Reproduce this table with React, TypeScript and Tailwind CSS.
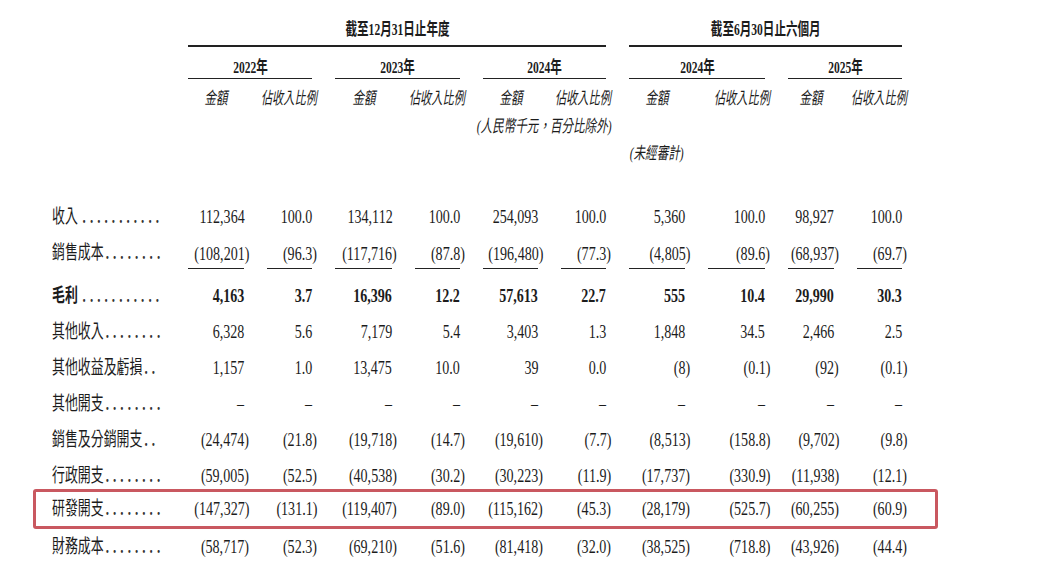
import React from 'react'

// shared column template: label, then amount / % pairs for each period
const GRID =
  'grid grid-cols-[118px_61px_50px_62px_50px_60px_50px_61px_62px_51px_50px] gap-x-[18px]'

type RowData = { label: string; values: string[]; bold?: boolean; dots: number }

const ROWS: RowData[] = [
  { label: '收入', dots: 11, values: ['112,364', '100.0', '134,112', '100.0', '254,093', '100.0', '5,360', '100.0', '98,927', '100.0'] },
  { label: '銷售成本', dots: 8, values: ['(108,201)', '(96.3)', '(117,716)', '(87.8)', '(196,480)', '(77.3)', '(4,805)', '(89.6)', '(68,937)', '(69.7)'] },
  { label: '毛利', dots: 11, bold: true, values: ['4,163', '3.7', '16,396', '12.2', '57,613', '22.7', '555', '10.4', '29,990', '30.3'] },
  { label: '其他收入', dots: 8, values: ['6,328', '5.6', '7,179', '5.4', '3,403', '1.3', '1,848', '34.5', '2,466', '2.5'] },
  { label: '其他收益及虧損', dots: 2, values: ['1,157', '1.0', '13,475', '10.0', '39', '0.0', '(8)', '(0.1)', '(92)', '(0.1)'] },
  { label: '其他開支', dots: 8, values: ['–', '–', '–', '–', '–', '–', '–', '–', '–', '–'] },
  { label: '銷售及分銷開支', dots: 2, values: ['(24,474)', '(21.8)', '(19,718)', '(14.7)', '(19,610)', '(7.7)', '(8,513)', '(158.8)', '(9,702)', '(9.8)'] },
  { label: '行政開支', dots: 8, values: ['(59,005)', '(52.5)', '(40,538)', '(30.2)', '(30,223)', '(11.9)', '(17,737)', '(330.9)', '(11,938)', '(12.1)'] },
  { label: '研發開支', dots: 8, values: ['(147,327)', '(131.1)', '(119,407)', '(89.0)', '(115,162)', '(45.3)', '(28,179)', '(525.7)', '(60,255)', '(60.9)'] },
  { label: '財務成本', dots: 8, values: ['(58,717)', '(52.3)', '(69,210)', '(51.6)', '(81,418)', '(32.0)', '(38,525)', '(718.8)', '(43,926)', '(44.4)'] },
]

function Label({ row }: { row: RowData }) {
  const short = row.label.length <= 2
  return (
    <div className="h-full flex items-center">
      <div className="origin-left scale-x-[0.68] flex items-center whitespace-nowrap text-[19px] leading-[22px]">
        <span className={row.bold ? 'font-bold' : ''}>{row.label}</span>
        <span className={`tracking-[6px] font-bold text-[#333] ${short ? 'ml-[7px]' : 'ml-[3px]'}`}>
          {'.'.repeat(row.dots)}
        </span>
      </div>
    </div>
  )
}

function Num({ v, bold, underline }: { v: string; bold?: boolean; underline?: boolean }) {
  const neg = v.endsWith(')')
  const text = (
    <span className={`inline-block origin-right scale-x-[0.74] whitespace-nowrap text-[19px] leading-[20px] ${bold ? 'font-bold' : ''}`}>
      {v}
      {!neg && <span className="invisible">)</span>}
    </span>
  )
  if (underline) {
    return (
      <div className="h-full flex flex-col justify-end items-end pb-[2px]">
        {text}
        <div className="mt-[4px] mr-[5px] self-stretch h-[1.5px] bg-[#222]" />
      </div>
    )
  }
  return <div className="h-full flex items-center justify-end">{text}</div>
}

function Cells({ row }: { row: RowData }) {
  return (
    <>
      <Label row={row} />
      {row.values.map((v, i) => (
        <Num key={i} v={v} bold={row.bold} underline={row.label === '銷售成本'} />
      ))}
    </>
  )
}

function Head({ children, italic }: { children: React.ReactNode; italic?: boolean }) {
  return (
    <span className={`inline-block scale-x-[0.68] whitespace-nowrap text-[17px] leading-[20px] ${italic ? 'italic' : 'font-bold'}`}>
      {children}
    </span>
  )
}

function SubHeads() {
  return (
    <>
      {[0, 1, 2, 3, 4].map((i) => (
        <React.Fragment key={i}>
          <div className="mr-[5px] flex justify-center">
            <Head italic>金額</Head>
          </div>
          <div className="flex justify-end">
            <span className="inline-block origin-right scale-x-[0.66] whitespace-nowrap text-[17px] leading-[20px] italic">
              佔收入比例
            </span>
          </div>
        </React.Fragment>
      ))}
    </>
  )
}

export default function App() {
  return (
    <div className="w-[1050px] h-[572px] overflow-hidden bg-white text-[#1c1c1c] font-['Liberation_Serif','Noto_Sans_CJK_TC',serif]">
      {/* period titles */}
      <div className={`${GRID} pl-[52px] pt-[20px]`}>
        <div />
        <div className="col-span-6 mr-[5px] flex flex-col items-center">
          <Head>截至12月31日止年度</Head>
          <div className="mt-[5px] self-stretch h-[1.5px] bg-[#222]" />
        </div>
        <div className="col-span-4 mr-[5px] flex flex-col items-center">
          <Head>截至6月30日止六個月</Head>
          <div className="mt-[5px] self-stretch h-[1.5px] bg-[#222]" />
        </div>
      </div>

      {/* years */}
      <div className={`${GRID} pl-[52px] mt-[12px]`}>
        <div />
        {['2022年', '2023年', '2024年', '2024年', '2025年'].map((y, i) => (
          <div key={i} className="col-span-2 mr-[5px] flex flex-col items-center">
            <span className="inline-block scale-x-[0.68] whitespace-nowrap text-[17px] leading-[18px] font-bold">{y}</span>
            <div className="mt-[1px] self-stretch h-[1.5px] bg-[#222]" />
          </div>
        ))}
      </div>

      {/* amount / ratio */}
      <div className={`${GRID} pl-[52px] mt-[10px]`}>
        <div />
        <SubHeads />
      </div>

      <div className={`${GRID} pl-[52px] mt-[8px]`}>
        <div className="col-start-6 col-span-2 mr-[5px] flex justify-center">
          <Head italic>(人民幣千元，百分比除外)</Head>
        </div>
      </div>

      <div className={`${GRID} pl-[52px] mt-[7px]`}>
        <div className="col-start-8 mr-[5px] flex justify-center">
          <Head italic>(未經審計)</Head>
        </div>
      </div>

      {/* body */}
      <div className="mt-[35px]">
        {ROWS.map((row, i) => {
          if (row.label === '研發開支') {
            return (
              <div key={i} className="-mt-[5px] ml-[33px] w-[905px] h-[40px] border-[3px] border-[#c95860] rounded-[3px]">
                <div className={`${GRID} pl-[16px] h-full items-center`}>
                  <Cells row={row} />
                </div>
              </div>
            )
          }
          return (
            <div key={i} className={`${GRID} pl-[52px] h-[36px] ${row.bold ? 'mt-[7px]' : ''}`}>
              <Cells row={row} />
            </div>
          )
        })}
      </div>
    </div>
  )
}
